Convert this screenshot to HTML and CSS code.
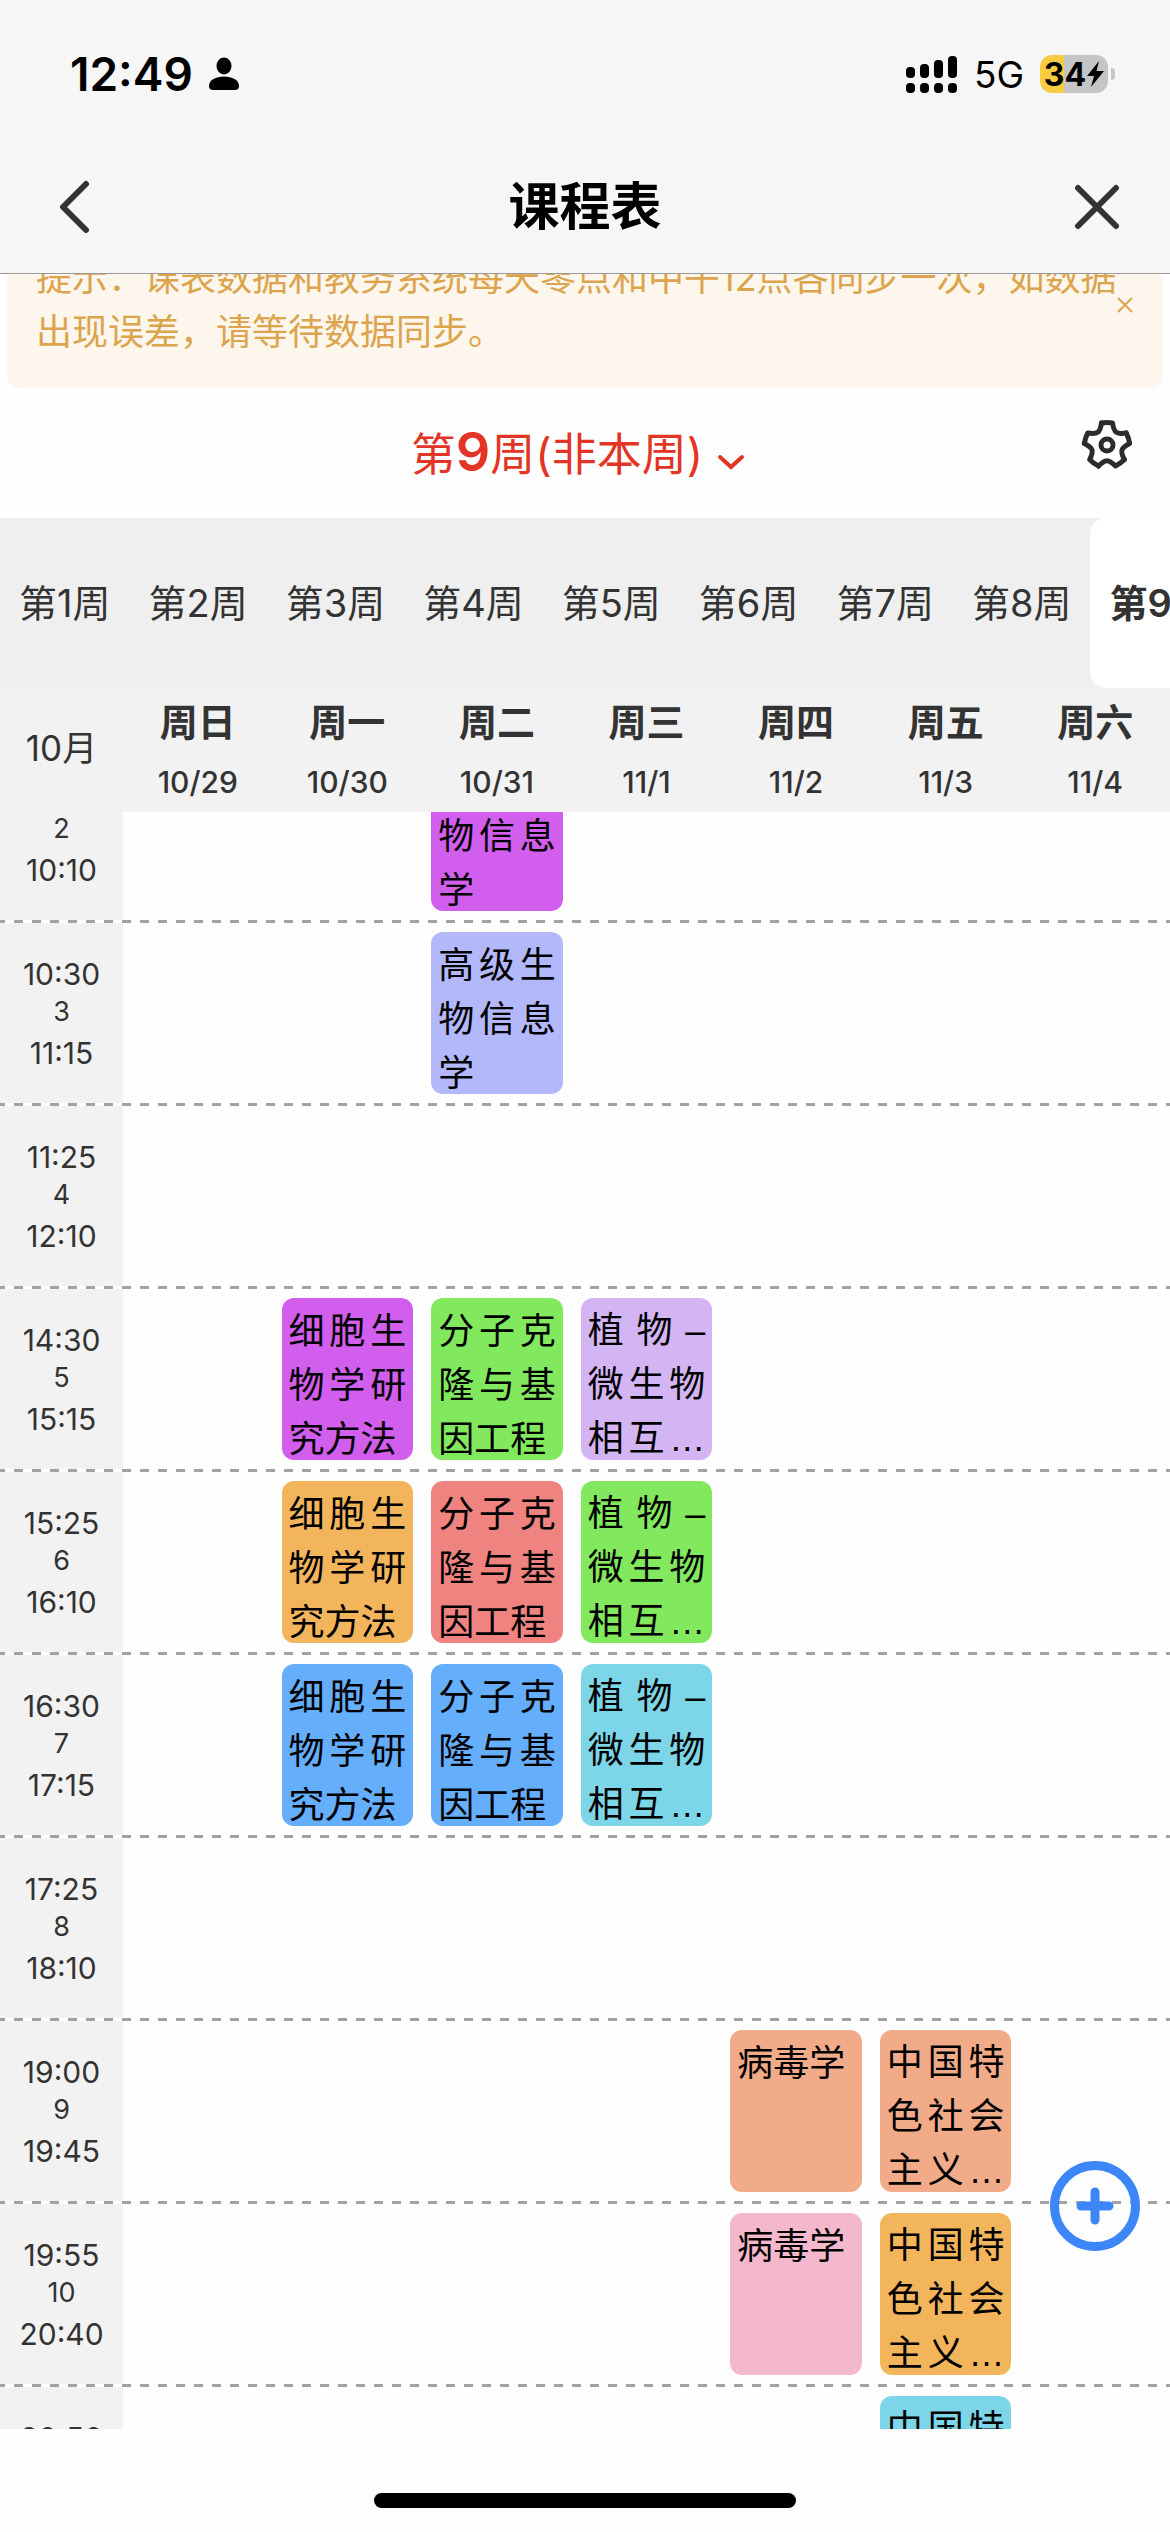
FILE: index.html
```html
<!DOCTYPE html>
<html lang="zh-CN">
<head>
<meta charset="utf-8">
<meta name="viewport" content="width=device-width">
<title>课程表</title>
<link rel="stylesheet" href="styles.css">
</head>
<body>
<div class="app">
  <header class="top">
    <div class="status">
      <div class="status-side">
        <span class="clock">12:49</span>
        <svg class="person" width="30" height="34" viewBox="0 0 30 34"><ellipse cx="15" cy="9" rx="7.5" ry="8.5"/><path d="M0 29C0 23 7 19.500 15 19.500S30 23 30 29Q30 33 26 33H4Q0 33 0 29Z"/></svg>
      </div>
      <div class="status-side">
        <svg width="52" height="38" viewBox="0 0 52 38"><rect y="12" width="9" height="11" rx="4"/><rect x="14" y="9" width="9" height="14" rx="4"/><rect x="28" y="5" width="9" height="18" rx="4"/><rect x="42" y="1" width="9" height="22" rx="4"/><rect y="28" width="9" height="10" rx="4"/><rect x="14" y="28" width="9" height="10" rx="4"/><rect x="28" y="28" width="9" height="10" rx="4"/><rect x="42" y="28" width="9" height="10" rx="4"/></svg>
        <span class="network">5G</span>
        <span class="battery"><span class="battery-body">34<svg width="17" height="26" viewBox="0 0 17 26"><path d="M12 0 0 15H7L4 26 17 10H9.500Z"/></svg></span><span class="battery-tip"></span></span>
      </div>
    </div>
    <div class="nav">
      <button class="icon-button back" type="button" aria-label="返回"><svg width="32" height="54" viewBox="0 0 32 54"><path d="M28 4 5 27 28 50"/></svg></button>
      <h1>课程表</h1>
      <button class="icon-button" type="button" aria-label="关闭"><svg width="46" height="46" viewBox="0 0 46 46"><path d="M4 4 42 42M42 4 4 42"/></svg></button>
    </div>
  </header>

  <section class="notice-wrap">
    <div class="notice">
      <p>提示：课表数据和教务系统每天零点和中午12点各同步一次，如数据出现误差，请等待数据同步。</p>
      <button class="notice-close" type="button" aria-label="关闭提示"><svg width="18" height="18" viewBox="0 0 18 18"><path d="M2 2 16 16M16 2 2 16"/></svg></button>
    </div>
  </section>

  <section class="week-bar">
    <button class="week-title" type="button">第<strong>9</strong>周(非本周)<svg width="28" height="18" viewBox="0 0 28 18"><path d="M3 4 14 14 25 4"/></svg></button>
    <button class="settings" type="button" aria-label="设置"><svg width="54" height="54" viewBox="-27 -27 54 54"><defs><path id="tooth" d="M-5.500-22Q0-23 5.500-22C7-12 9.700-10.500 19.200-12"/></defs><use href="#tooth"/><use href="#tooth" transform="rotate(72)"/><use href="#tooth" transform="rotate(144)"/><use href="#tooth" transform="rotate(216)"/><use href="#tooth" transform="rotate(288)"/><circle r="6"/></svg></button>
  </section>

  <nav class="weeks">
    <button type="button">第1周</button>
    <button type="button">第2周</button>
    <button type="button">第3周</button>
    <button type="button">第4周</button>
    <button type="button">第5周</button>
    <button type="button">第6周</button>
    <button type="button">第7周</button>
    <button type="button">第8周</button>
    <button type="button" class="current">第9周</button>
  </nav>

  <table class="timetable">
    <thead>
      <tr>
        <th class="month">10月</th>
        <th>周日<small>10/29</small></th>
        <th>周一<small>10/30</small></th>
        <th>周二<small>10/31</small></th>
        <th>周三<small>11/1</small></th>
        <th>周四<small>11/2</small></th>
        <th>周五<small>11/3</small></th>
        <th>周六<small>11/4</small></th>
      </tr>
    </thead>
    <tbody>
      <tr>
        <th><span></span><b>2</b><span>10:10</span></th>
        <td></td><td></td><td><div class="course magenta">高级生物信息学</div></td><td></td><td></td><td></td><td></td>
      </tr>
      <tr>
        <th><span>10:30</span><b>3</b><span>11:15</span></th>
        <td></td><td></td><td><div class="course periwinkle">高级生物信息学</div></td><td></td><td></td><td></td><td></td>
      </tr>
      <tr>
        <th><span>11:25</span><b>4</b><span>12:10</span></th>
        <td></td><td></td><td></td><td></td><td></td><td></td><td></td>
      </tr>
      <tr>
        <th><span>14:30</span><b>5</b><span>15:15</span></th>
        <td></td><td><div class="course magenta">细胞生物学研究方法</div></td><td><div class="course green">分子克隆与基因工程</div></td><td><div class="course lilac cut">植物–微生物相互…</div></td><td></td><td></td><td></td>
      </tr>
      <tr>
        <th><span>15:25</span><b>6</b><span>16:10</span></th>
        <td></td><td><div class="course orange">细胞生物学研究方法</div></td><td><div class="course red">分子克隆与基因工程</div></td><td><div class="course green cut">植物–微生物相互…</div></td><td></td><td></td><td></td>
      </tr>
      <tr>
        <th><span>16:30</span><b>7</b><span>17:15</span></th>
        <td></td><td><div class="course blue">细胞生物学研究方法</div></td><td><div class="course blue">分子克隆与基因工程</div></td><td><div class="course cyan cut">植物–微生物相互…</div></td><td></td><td></td><td></td>
      </tr>
      <tr>
        <th><span>17:25</span><b>8</b><span>18:10</span></th>
        <td></td><td></td><td></td><td></td><td></td><td></td><td></td>
      </tr>
      <tr>
        <th><span>19:00</span><b>9</b><span>19:45</span></th>
        <td></td><td></td><td></td><td></td><td><div class="course salmon">病毒学</div></td><td><div class="course salmon cut">中国特色社会主义…</div></td><td></td>
      </tr>
      <tr>
        <th><span>19:55</span><b>10</b><span>20:40</span></th>
        <td></td><td></td><td></td><td></td><td><div class="course pink">病毒学</div></td><td><div class="course orange cut">中国特色社会主义…</div></td><td></td>
      </tr>
      <tr>
        <th><span>20:50</span></th>
        <td></td><td></td><td></td><td></td><td></td><td><div class="course cyan cut">中国特</div></td><td></td>
      </tr>
    </tbody>
  </table>

  <footer class="home"><span></span></footer>
  <button class="add" type="button" aria-label="添加课程"><svg width="90" height="90" viewBox="0 0 90 90"><circle cx="45" cy="45" r="40.500"/><path d="M45 31V59M31 45H59"/></svg></button>
</div>
</body>
</html>
```

FILE: styles.css
```css
* { box-sizing: border-box; }

body {
  margin: 0;
  background: #fefefe;
  color: #333;
  font-family: Inter, "Noto Sans CJK SC", sans-serif;
}

button {
  margin: 0;
  padding: 0;
  border: 0;
  background: none;
  color: inherit;
  font: inherit;
}

svg { display: block; flex: none; }

.app {
  position: relative;
  display: flex;
  flex-direction: column;
  height: 100vh;
  overflow: hidden;
}

/* status bar and title */
.top {
  flex: none;
  background: #f6f6f6;
  border-bottom: 1px solid #999;
}

.status {
  display: flex;
  justify-content: space-between;
  align-items: center;
  height: 148px;
  padding: 0 55px 0 70px;
  color: #000;
}

.status-side { display: flex; align-items: center; gap: 16px; }
.clock { font-size: 46px; font-weight: 600; }
.network { font-size: 37px; }
.battery { display: flex; align-items: center; gap: 3px; }

.battery-body {
  display: flex;
  align-items: center;
  justify-content: center;
  gap: 1px;
  width: 68px;
  height: 38px;
  border-radius: 12px;
  background: linear-gradient(90deg, #f8cc42 24px, #c4c6c5 24px);
  font-size: 32px;
  font-weight: 700;
}

.battery-tip {
  width: 4px;
  height: 12px;
  border-radius: 0 4px 4px 0;
  background: #c4c6c5;
}

.nav {
  display: flex;
  justify-content: space-between;
  height: 125px;
  padding: 32px 50px 0;
}

.nav h1 {
  margin: 0;
  color: #000;
  font-size: 51px;
  line-height: 54px;
  font-weight: 600;
}

.icon-button { display: flex; align-items: center; width: 46px; height: 54px; }
.icon-button svg { fill: none; stroke: #333; stroke-width: 6; stroke-linecap: round; stroke-linejoin: round; }
.back { padding-left: 8px; }

/* sync notice, scrolled under the header */
.notice-wrap { flex: none; padding: 0 7px; overflow: hidden; }

.notice {
  position: relative;
  margin-top: -40px;
  padding: 17px 37px 29px 29px;
  border-radius: 12px;
  background: #fcf6ec;
  color: #dca44c;
  font-size: 36px;
  line-height: 54px;
}

.notice p { margin: 0; }
.notice-close { position: absolute; right: 29px; top: 62px; }
.notice-close svg { fill: none; stroke: #dca44c; stroke-width: 2; }

/* selected week */
.week-bar {
  position: relative;
  flex: none;
  display: flex;
  justify-content: center;
  align-items: center;
  height: 130px;
  padding-right: 14px;
}

.week-title {
  display: flex;
  align-items: baseline;
  color: #e33425;
  font-size: 45px;
  line-height: 60px;
}

.week-title strong { font-size: 54px; font-weight: 600; }
.week-title svg { margin-left: 14px; fill: none; stroke: #e33425; stroke-width: 4; stroke-linecap: round; }
.settings { position: absolute; right: 36px; top: 30px; }
.settings svg { fill: none; stroke: #2c2c2c; stroke-width: 5; stroke-linecap: round; stroke-linejoin: round; }

/* week tabs */
.weeks {
  flex: none;
  display: flex;
  height: 170px;
  overflow: hidden;
  background: #efefef;
}

.weeks button { flex: none; padding: 0 19px 5px; font-size: 38px; }
.weeks .current { border-radius: 16px; background: #fff; font-weight: 600; }

/* timetable */
.timetable {
  flex: 1;
  min-height: 0;
  display: flex;
  flex-direction: column;
}

.timetable tr { display: grid; grid-template-columns: 123px repeat(7, 1fr); }
.timetable td, .timetable th { min-width: 0; padding: 0; }
.timetable thead { display: block; flex: none; background: #f2f2f2; }
.timetable thead tr { height: 124px; }

.timetable thead th {
  padding-top: 8px;
  font-size: 38px;
  line-height: 52px;
  font-weight: 600;
}

.timetable small { display: block; font-size: 30px; font-weight: 500; line-height: 68px; }
.timetable thead .month { padding-top: 34px; font-size: 35px; font-weight: 400; }

.timetable tbody { display: block; flex: 1; min-height: 0; overflow: hidden; }

.timetable tbody tr {
  position: relative;
  height: 183px;
}

.timetable tbody tr:first-child { margin-top: -72px; }

.timetable tbody tr::after {
  content: "";
  position: absolute;
  left: 0;
  right: 0;
  bottom: 0;
  height: 3px;
  background: repeating-linear-gradient(90deg, #a2a2a2 0 9px, #fefefe 9px 18px) -4px 0 / 1188px 3px;
}

.timetable tbody th {
  display: flex;
  flex-direction: column;
  align-items: center;
  padding-top: 31px;
  background: #f2f2f2;
  font-size: 30px;
  line-height: 40px;
  font-weight: 400;
}

.timetable tbody th span { height: 40px; }
.timetable tbody th b { margin-bottom: 3px; font-size: 27px; line-height: 36px; font-weight: 400; }
.timetable td { padding: 9px; }

.course {
  height: 162px;
  padding: 6px 7px 0;
  overflow: hidden;
  border-radius: 12px;
  color: #000;
  font-size: 36px;
  line-height: 54px;
  text-align: justify;
}

.cut {
  font-family: "Liberation Sans", "Noto Sans CJK SC", sans-serif;
  text-align-last: justify;
}

.magenta { background: #d15eec; }
.periwinkle { background: #b2b8fa; }
.green { background: #82e85e; }
.lilac { background: #d3b5f4; }
.orange { background: #f3b55c; }
.red { background: #ee8380; }
.blue { background: #65aefb; }
.cyan { background: #7dd6e8; }
.salmon { background: #f1ab88; }
.pink { background: #f4b8cd; }

/* home indicator and add button */
.home { flex: none; display: flex; justify-content: center; height: 103px; padding-top: 64px; }
.home span { width: 36%; height: 15px; border-radius: 8px; background: #000; }
.add { position: absolute; right: 30px; bottom: 281px; }
.add svg { fill: none; stroke: #3d86f8; stroke-width: 9; stroke-linecap: round; }
```
